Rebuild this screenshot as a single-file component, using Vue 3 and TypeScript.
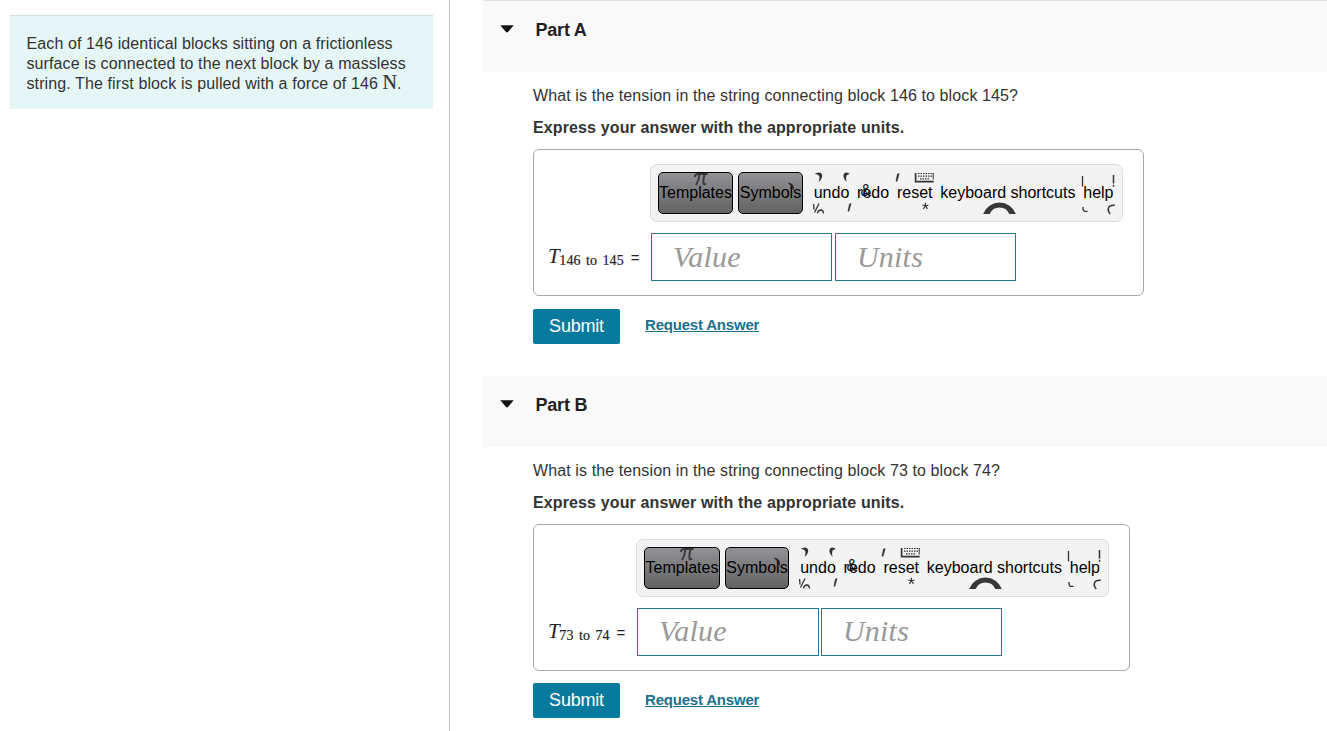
<script setup lang="ts">
interface Part {
  id: string
  title: string
  question: string
  subscript: string
}

const parts: Part[] = [
  {
    id: 'a',
    title: 'Part A',
    question: 'What is the tension in the string connecting block 146 to block 145?',
    subscript: '146 to 145',
  },
  {
    id: 'b',
    title: 'Part B',
    question: 'What is the tension in the string connecting block 73 to block 74?',
    subscript: '73 to 74',
  },
]

const actions: string[] = ['undo', 'redo', 'reset', 'keyboard shortcuts', 'help']
</script>

<template>
  <div class="page">
    <aside class="sidebar">
      <div class="problem">
        <div class="line">Each of 146 identical blocks sitting on a frictionless</div>
        <div class="line">surface is connected to the next block by a massless</div>
        <div class="line">string. The first block is pulled with a force of 146 <span class="newton">N</span>.</div>
      </div>
    </aside>
    <main class="content">
      <section v-for="part in parts" :key="part.id" class="part" :class="part.id">
        <header class="part-head">
          <svg class="caret" width="14" height="8" viewBox="0 0 14 8"><path d="M0.3 0.3H13.7L8 7.1Q7 8 6 7.1Z" fill="#111" /></svg>
          <h2>{{ part.title }}</h2>
        </header>
        <div class="part-body">
          <p class="question">{{ part.question }}</p>
          <p class="instruction">Express your answer with the appropriate units.</p>
          <div class="answer">
            <div class="label"><i>T</i><span class="sub">{{ part.subscript }}</span><span class="eq">=</span></div>
            <div class="editor">
              <div class="toolbar">
                <button class="tool">Templates</button>
                <button class="tool symbols">Symbols</button>
                <div class="actions">
                  <span v-for="action in actions" :key="action">{{ action }}</span>
                </div>
                <svg class="marks" width="473" height="58" viewBox="0 0 473 58" fill="none" stroke="#333">
                  <path d="M44.5 13Q45.5 10 48 10H57.5M49.3 10.5Q49.3 16 46 21M54.5 10.5Q53 16 53.3 19Q53.8 21.5 56 19.5" stroke="#37373c" stroke-width="1.9" />
                  <path d="M137.5 18.5Q145 19 144 27Q142 22 137.5 18.5Z" fill="#222" stroke="none" />
                  <path d="M164.5 10Q168 7.5 171 9Q174.5 13 168.5 18Q170.5 13 168.5 11.3Q167 10 164.5 10Z" fill="#333" stroke="none" />
                  <path d="M200 10Q197 7.5 194.5 9Q191.5 12 196.5 18Q195.5 13.5 196.5 11.5Q198 10 200 10Z" fill="#333" stroke="none" />
                  <path d="M249.3 9.5L247.3 10L245.9 17.3H247.2Z" fill="#333" stroke="#333" stroke-width=".4" />
                  <path d="M265.6 9V17.7H283.7" stroke-width="1.7" />
                  <path d="M268 9.5H283.5M268 12.2H283M270 14.9H280" stroke-width="1.2" stroke-dasharray="1.5 1" />
                  <path d="M283.2 9V15.5" stroke-width="1" />
                  <path d="M163.6 40L164 45.5M169 39.5L164.5 48.5M167.5 49.5Q168 46 170.8 46Q173.5 46.2 173.5 49.5" stroke-width="1.3" />
                  <path d="M201 39.5L199.5 40L198 47.3L199 47Z" fill="#333" stroke-width=".7" />
                  <path d="M275.4 38.7V42L278.4 41M275.4 42L277.5 44.8M275.4 42L273.3 44.8M275.4 42L272.4 41" stroke-width="1.2" />
                  <path d="M333.1 50A17.5 17.5 0 0 1 365.9 50H359.3A10.7 10.7 0 0 0 339.7 50Z" fill="#383838" stroke="none" />
                  <path d="M432.5 12V22.5M433 43V45Q433.3 47.3 435 47.3H437.5" stroke-width="1.3" />
                  <path d="M463.5 11V19.5M463.5 20.7V22.7" stroke-width="1.5" />
                  <path d="M464.8 41.3Q458.2 41 458.2 45.5Q458.3 48 460.2 50" stroke-width="1.6" />
                  <text x="210.5" y="32" fill="#111" stroke="none" font-family="Liberation Sans" font-size="16">&amp;</text>
                </svg>
              </div>
              <div class="fields">
                <div class="field">Value</div>
                <div class="field">Units</div>
              </div>
            </div>
          </div>
          <div class="controls">
            <button class="submit">Submit</button>
            <a class="request">Request Answer</a>
          </div>
        </div>
      </section>
    </main>
  </div>
</template>

<style>
body {
  margin: 0;
  background: #fff;
  overflow: hidden;
}
</style>

<style scoped>
.page {
  display: flex;
  height: 731px;
  overflow: hidden;
  font-family: "Liberation Sans", Arial, sans-serif;
  font-size: 16px;
  color: #333;
}
.sidebar {
  box-sizing: border-box;
  width: 450px;
  flex: none;
  padding: 15px 16px 0 10px;
  border-right: 1px solid #bac4ce;
}
.problem {
  box-sizing: border-box;
  height: 94px;
  padding: 18px 0 0 16.5px;
  border-top: 1px solid #d2dfdf;
  background: #e6f6f7;
}
.line {
  height: 20px;
  line-height: 20px;
  letter-spacing: 0.11px;
  white-space: nowrap;
}
.newton {
  font-family: "Liberation Serif", serif;
  font-size: 20px;
  line-height: 0;
  -webkit-text-stroke: 0.2px #333;
}
.content {
  width: 844px;
  flex: none;
  margin-left: 33px;
}
.part {
  height: 375px;
}
.part-head {
  box-sizing: border-box;
  display: flex;
  height: 72px;
  padding: 19px 0 0 17px;
  background: #f9f9f9;
  border-top: 1px solid #e2e2e2;
}
.b .part-head {
  height: 71px;
  margin-top: 1px;
  border-top-color: #f9f9f9;
  padding-top: 18px;
}
.caret {
  margin-top: 5px;
}
h2 {
  margin: 0 0 0 21.5px;
  font-size: 18px;
  letter-spacing: -0.2px;
  line-height: 20px;
  color: #1f1f1f;
}
.part-body {
  padding: 14px 0 0 50px;
}
p {
  margin: 0;
  line-height: 20px;
  letter-spacing: 0.11px;
  white-space: nowrap;
}
.instruction {
  margin-top: 12px;
  font-weight: bold;
  letter-spacing: 0.125px;
}
.answer {
  box-sizing: border-box;
  display: flex;
  width: 611px;
  height: 147px;
  margin-top: 11px;
  padding: 14px 0 0 14px;
  border: 1px solid #a9a9a9;
  border-radius: 6px;
}
.b .answer {
  width: 597px;
}
.label {
  display: flex;
  align-items: baseline;
  width: 102px;
  height: 26px;
  margin-top: 79px;
  flex: none;
  font-family: "Liberation Serif", serif;
  color: #222;
  line-height: 26px;
  white-space: nowrap;
}
.b .label {
  width: 88px;
}
.label i {
  width: 11.3px;
  font-size: 21px;
}
.sub {
  position: relative;
  top: 2px;
  font-size: 14px;
  letter-spacing: 0.1px;
  word-spacing: 1.8px;
  -webkit-text-stroke: 0.2px #222;
}
.eq {
  margin-left: 7px;
  font-family: "Liberation Sans", sans-serif;
  font-size: 15px;
}
.toolbar {
  position: relative;
  box-sizing: border-box;
  display: flex;
  width: 473px;
  height: 58px;
  padding: 7px 0 0 7px;
  border: 1px solid #ddd;
  border-radius: 7px;
  background: #f3f3f3;
  color: #000;
}
.tool {
  box-sizing: border-box;
  width: 75px;
  height: 42px;
  margin-right: 5px;
  padding: 0;
  display: flex;
  align-items: center;
  justify-content: center;
  flex: none;
  border: 1px solid #000;
  border-radius: 5px;
  background: linear-gradient(#929297, #626262);
  font: 16px "Liberation Sans", sans-serif;
  color: #000;
}
.symbols {
  width: 65px;
  margin-right: 10.7px;
}
.b .tool {
  width: 76px;
}
.b .symbols {
  width: 64px;
  margin-right: 11.2px;
}
.actions {
  display: flex;
  gap: 7.8px;
  height: 42px;
  line-height: 42px;
  white-space: nowrap;
}
.marks {
  position: absolute;
  left: -1px;
  top: -1px;
}
.fields {
  display: flex;
  gap: 3px;
  margin: 11px 0 0 1px;
}
.field {
  box-sizing: border-box;
  width: 181px;
  height: 48px;
  padding-left: 21px;
  border: 1px solid #217b91;
  font: italic 30px/46px "Liberation Serif", serif;
  letter-spacing: 0.2px;
  color: #999;
}
.b .fields {
  gap: 2px;
}
.b .field {
  line-height: 44px;
}
.b .field:first-child {
  width: 182px;
}
.controls {
  display: flex;
  margin-top: 13px;
}
.b .controls {
  margin-top: 12px;
}
.submit {
  width: 87px;
  height: 35px;
  padding: 0;
  border: 0;
  border-radius: 2px;
  background: #077a9d;
  color: #fff;
  font: 18px "Liberation Sans", sans-serif;
  letter-spacing: -0.2px;
}
.request {
  margin: 6px 0 0 25px;
  color: #1b718d;
  font-size: 15px;
  font-weight: bold;
  letter-spacing: -0.2px;
  line-height: 20px;
  text-decoration: underline;
}
.b .request {
  margin-top: 7px;
}
</style>
